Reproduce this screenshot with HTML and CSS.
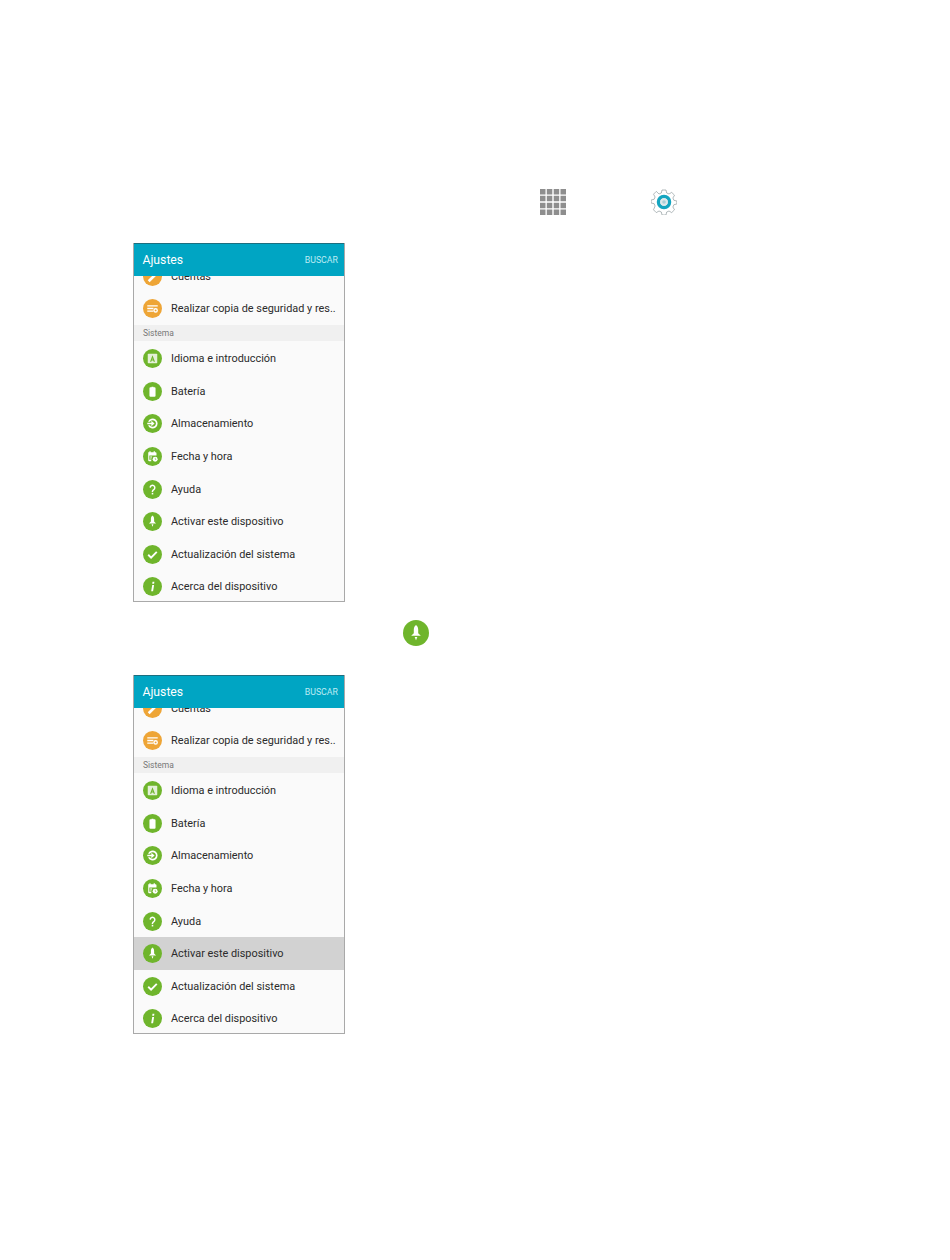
FILE: index.html
```html
<!DOCTYPE html>
<html lang="es">

<head>
    <meta charset="UTF-8">
    <meta name="viewport" content="width=device-width, initial-scale=1.0">
    <title>Ajustes</title>
    <link rel="stylesheet" href="styles.css">
</head>

<body>
    <svg class="defs" width="0" height="0">
        <symbol id="i-cuentas" viewBox="0 0 20 20">
            <circle cx="10" cy="10" r="10" fill="#eea536" />
            <path d="M5 14l7-7 2 2-7 7z" fill="#fff" />
        </symbol>
        <symbol id="i-backup" viewBox="0 0 20 20">
            <circle cx="10" cy="10" r="10" fill="#eea536" />
            <path d="M4.500 6.500h11V8h-11zM4.500 9.300h6.500v1.400H4.500zM4.500 12h6.500v1.400H4.500z" fill="#fff" />
            <circle cx="13.300" cy="12" r="2.400" fill="#fff" />
            <circle cx="13.300" cy="12" r="1" fill="#eea536" />
        </symbol>
        <symbol id="i-idioma" viewBox="0 0 20 20">
            <circle cx="10" cy="10" r="10" fill="#6fb52c" />
            <rect x="5" y="5" width="10" height="10" rx=".8" fill="#e4f0d8" />
            <path d="M10 6.500l2.600 7h-1.300l-.5-1.400H9.200l-.5 1.400H7.400zM9.600 11h.8L10 9.700z" fill="#6fb52c" fill-rule="evenodd" />
        </symbol>
        <symbol id="i-bateria" viewBox="0 0 20 20">
            <circle cx="10" cy="10" r="10" fill="#6fb52c" />
            <path d="M7.800 5.500h1.200V5h2v.5h1.200a1 1 0 0 1 1 1v8a1 1 0 0 1-1 1H7.800a1 1 0 0 1-1-1v-8a1 1 0 0 1 1-1z" fill="#fff" />
        </symbol>
        <symbol id="i-almacen" viewBox="0 0 20 20">
            <circle cx="10" cy="10" r="10" fill="#6fb52c" />
            <path d="M5.300 8.200A5.200 5.200 0 1 1 5.300 11.800h2a3.400 3.400 0 1 0 0-3.600z" fill="#fff" />
            <path d="M4.500 9.100h4.300V7l3.400 3-3.400 3v-2.100H4.500z" fill="#fff" />
        </symbol>
        <symbol id="i-fecha" viewBox="0 0 20 20">
            <circle cx="10" cy="10" r="10" fill="#6fb52c" />
            <path d="M5.500 5.500h1.200v-1H8v1h3.200v-1h1.300v1h.7a1 1 0 0 1 1 1V9H6.700v4.500h2V15h-2.200a1 1 0 0 1-1-1z" fill="#fff" />
            <path d="M7.500 10h2v1h-2zM7.500 12h1.500v.9H7.500z" fill="#fff" />
            <circle cx="12.800" cy="12.800" r="2.600" fill="#fff" />
            <path d="M12.500 11.400h.6v1.300l1 .6-.3.400-1.300-.8z" fill="#6fb52c" />
        </symbol>
        <symbol id="i-ayuda" viewBox="0 0 20 20">
            <circle cx="10" cy="10" r="10" fill="#6fb52c" />
            <path d="M6.800 8a3.200 3.200 0 1 1 5 2.700c-.9.600-1.100 1-1.100 1.800H9.200c0-1.300.4-2 1.500-2.800.7-.5 1-.9 1-1.600a1.700 1.700 0 0 0-3.400 0z" fill="#fff" />
            <rect x="9.200" y="13.500" width="1.600" height="1.700" fill="#fff" />
        </symbol>
        <symbol id="i-activar" viewBox="0 0 20 20">
            <circle cx="10" cy="10" r="10" fill="#6fb52c" />
            <path d="M10 3.800c1.200.8 1.700 2.200 1.700 3.700v2.600l2 2.100H6.300l2-2.100V7.500c0-1.500.5-2.900 1.700-3.700z" fill="#fff" />
            <path d="M9 13h2l-1 2.500z" fill="#fff" />
        </symbol>
        <symbol id="i-update" viewBox="0 0 20 20">
            <circle cx="10" cy="10" r="10" fill="#6fb52c" />
            <path d="M5.500 10.300l3 3 6-6" fill="none" stroke="#fff" stroke-width="2" />
        </symbol>
        <symbol id="i-info" viewBox="0 0 20 20">
            <circle cx="10" cy="10" r="10" fill="#6fb52c" />
            <path d="M9.700 8.500h2l-1.100 6.500H8.600zM10 5h2l-.3 2h-2z" fill="#fff" />
        </symbol>
    </svg>

    <div class="top-icons">
        <svg class="grid-icon" width="26" height="26" viewBox="0 0 26 26" fill="#8e8e8e">
            <path d="M0 0h5.500v5.500H0zM6.800 0h5.500v5.500H6.800zM13.700 0h5.500v5.500h-5.500zM20.500 0H26v5.500h-5.500zM0 6.800h5.500v5.500H0zM6.800 6.800h5.500v5.500H6.800zM13.700 6.800h5.500v5.500h-5.500zM20.500 6.800H26v5.500h-5.500zM0 13.700h5.500v5.500H0zM6.800 13.700h5.500v5.500H6.800zM13.700 13.700h5.500v5.500h-5.500zM20.500 13.700H26v5.500h-5.500zM0 20.500h5.500V26H0zM6.800 20.500h5.500V26H6.800zM13.700 20.500h5.500V26h-5.500zM20.500 20.500H26V26h-5.500z" />
        </svg>
        <svg class="gear-icon" width="26" height="26" viewBox="0 0 26 26">
            <path d="M11 1h4l.7 3 2.300 1 2.700-1.600 2.800 2.800L21.900 9l1 2.300 3 .7v3l-3 .7-1 2.300 1.600 2.800-2.800 2.800-2.700-1.600-2.300 1-.7 3h-4l-.7-3-2.300-1-2.700 1.600-2.800-2.800L4.100 17l-1-2.300-3-.7v-3l3-.7 1-2.300-1.600-2.800 2.800-2.800L8 5l2.300-1z" fill="#fff" stroke="#7d8b8f" stroke-width=".6" />
            <circle cx="13" cy="13" r="5.500" fill="none" stroke="#14a5c0" stroke-width="3.500" />
            <circle cx="13" cy="13" r="3.700" fill="#dfe8ea" />
            <circle cx="13" cy="13" r="1.800" fill="#a9cfd8" />
        </svg>
    </div>

    <div class="phone">
        <div class="app-bar">
            <span class="app-title">Ajustes</span>
            <span class="app-action">BUSCAR</span>
        </div>
        <div class="row-cut">
            <div class="row"><svg class="ico"><use href="#i-cuentas" /></svg><span>Cuentas</span></div>
        </div>
        <div class="row"><svg class="ico"><use href="#i-backup" /></svg><span>Realizar copia de seguridad y res..</span></div>
        <div class="section">Sistema</div>
        <div class="row"><svg class="ico"><use href="#i-idioma" /></svg><span>Idioma e introducción</span></div>
        <div class="row"><svg class="ico"><use href="#i-bateria" /></svg><span>Batería</span></div>
        <div class="row"><svg class="ico"><use href="#i-almacen" /></svg><span>Almacenamiento</span></div>
        <div class="row"><svg class="ico"><use href="#i-fecha" /></svg><span>Fecha y hora</span></div>
        <div class="row"><svg class="ico"><use href="#i-ayuda" /></svg><span>Ayuda</span></div>
        <div class="row"><svg class="ico"><use href="#i-activar" /></svg><span>Activar este dispositivo</span></div>
        <div class="row"><svg class="ico"><use href="#i-update" /></svg><span>Actualización del sistema</span></div>
        <div class="row"><svg class="ico"><use href="#i-info" /></svg><span>Acerca del dispositivo</span></div>
    </div>

    <div class="step-icon">
        <svg width="26" height="26"><use href="#i-activar" /></svg>
    </div>

    <div class="phone">
        <div class="app-bar">
            <span class="app-title">Ajustes</span>
            <span class="app-action">BUSCAR</span>
        </div>
        <div class="row-cut">
            <div class="row"><svg class="ico"><use href="#i-cuentas" /></svg><span>Cuentas</span></div>
        </div>
        <div class="row"><svg class="ico"><use href="#i-backup" /></svg><span>Realizar copia de seguridad y res..</span></div>
        <div class="section">Sistema</div>
        <div class="row"><svg class="ico"><use href="#i-idioma" /></svg><span>Idioma e introducción</span></div>
        <div class="row"><svg class="ico"><use href="#i-bateria" /></svg><span>Batería</span></div>
        <div class="row"><svg class="ico"><use href="#i-almacen" /></svg><span>Almacenamiento</span></div>
        <div class="row"><svg class="ico"><use href="#i-fecha" /></svg><span>Fecha y hora</span></div>
        <div class="row"><svg class="ico"><use href="#i-ayuda" /></svg><span>Ayuda</span></div>
        <div class="row selected"><svg class="ico"><use href="#i-activar" /></svg><span>Activar este dispositivo</span></div>
        <div class="row"><svg class="ico"><use href="#i-update" /></svg><span>Actualización del sistema</span></div>
        <div class="row"><svg class="ico"><use href="#i-info" /></svg><span>Acerca del dispositivo</span></div>
    </div>
</body>

</html>
```

FILE: styles.css
```css
* {
    margin: 0;
    padding: 0;
    box-sizing: border-box;
}

body {
    background-color: #fff;
    font-family: "Roboto", "Liberation Sans", sans-serif;
    color: #2b2b2b;
}

.defs {
    position: absolute;
}

.top-icons {
    display: flex;
    gap: 85px;
    padding-top: 189px;
    padding-left: 540px;
    height: 215px;
}

.phone {
    width: 212px;
    height: 359px;
    margin-left: 133px;
    margin-top: 28px;
    border: 1px solid #a9a9a9;
    border-top: none;
    background-color: #fafafa;
    overflow: hidden;
}

.app-bar {
    display: flex;
    justify-content: space-between;
    align-items: center;
    height: 33px;
    padding: 0 6px 0 8.500px;
    background-color: #00a5c3;
    border-top: 1px solid #1b6f80;
    color: #fff;
}

.app-title {
    font-size: 12.200px;
}

.app-action {
    font-size: 8.800px;
    color: #bdebf3;
}

.row {
    display: flex;
    align-items: center;
    gap: 9px;
    height: 32.600px;
    padding-left: 9px;
    font-size: 10.900px;
    white-space: nowrap;
}

.row.selected {
    background-color: #d2d2d2;
}

.row-cut {
    height: 16px;
    overflow: hidden;
}

.row-cut .row {
    margin-top: -16px;
}

.ico {
    width: 19px;
    height: 19px;
    flex-shrink: 0;
}

.section {
    height: 16.500px;
    line-height: 16.500px;
    margin-bottom: 1.250px;
    padding-left: 9px;
    background-color: #f0f0f0;
    font-size: 8.500px;
    color: #777;
}

.step-icon {
    height: 27px;
    margin-top: 18px;
    padding-left: 403px;
}
```
